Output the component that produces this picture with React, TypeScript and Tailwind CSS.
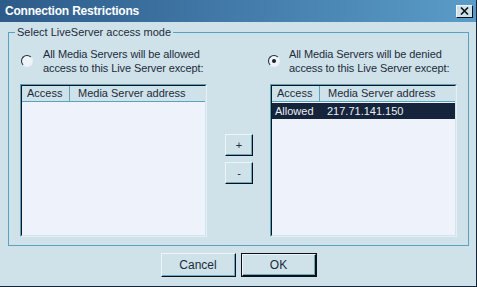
import React from 'react';

const font = "font-['Liberation_Sans',Arial,sans-serif]";

function Radio({ checked }: { checked?: boolean }) {
  return (
    <div className="relative h-[12px] w-[12px] shrink-0 rounded-full border border-t-[#1a2838] border-l-[#1a2838] border-r-[#e9f1f6] border-b-[#e9f1f6] bg-[#eef4f9]">
      {checked && (
        <div className="absolute left-[3px] top-[3px] h-[4px] w-[4px] rounded-full bg-[#15202c]" />
      )}
    </div>
  );
}

function ListView({ rows }: { rows: { access: string; addr: string }[] }) {
  return (
    <div className="mt-[10px] h-[153px] border border-t-[#5aa3bc] border-l-[#5aa3bc] border-r-[#e6f0f4] border-b-[#e6f0f4]">
      <div className="h-full border border-t-[#0d1722] border-l-[#0d1722] border-r-[#d2e4eb] border-b-[#d2e4eb] bg-[#eef3fb]">
        <div className="flex h-[16px] border-b border-[#5aa3bc] bg-[#cfe2ea] text-[11px] leading-[15px] text-[#1c2b3b]">
          <div className="w-[48px] shrink-0 border-r border-[#5aa3bc] pl-[5px]">Access</div>
          <div className="flex-1 pl-[8px]">Media Server address</div>
        </div>
        <div className="pt-[1px]">
          {rows.map((r) => (
            <div
              key={r.addr}
              className="flex h-[16px] bg-[#15243a] text-[11px] leading-[16px] text-[#e9eff6]"
            >
              <div className="w-[48px] shrink-0 pl-[3px]">{r.access}</div>
              <div className="flex-1 pl-[7px]">{r.addr}</div>
            </div>
          ))}
        </div>
      </div>
    </div>
  );
}

function Btn({ children, className = '' }: { children: React.ReactNode; className?: string }) {
  return (
    <div
      className={`flex items-center justify-center border border-t-[#eef5f8] border-l-[#eef5f8] border-r-[#0c1117] border-b-[#0c1117] bg-[#cfe2ea] text-[11px] text-[#1c2b3b] shadow-[inset_-1px_-1px_0_#6aa9bf] ${className}`}
    >
      {children}
    </div>
  );
}

export default function App() {
  return (
    <div className={`${font} h-[287px] w-[477px] overflow-hidden border-r border-b border-[#14253a] bg-[#cfe2ea] text-[#1c2b3b]`}>
      {/* title bar */}
      <div className="flex h-[22px] items-center justify-between bg-gradient-to-r from-[#2d5b8a] to-[#5a9cc9] pl-[5px] pr-[3px]">
        <span className="text-[12px] font-bold tracking-[-0.2px] text-white">Connection Restrictions</span>
        <div className="flex h-[13px] w-[17px] items-center justify-center border border-t-[#eef5f8] border-l-[#eef5f8] border-r-[#0c1117] border-b-[#0c1117] bg-[#cfe2ea]">
          <svg width="9" height="8" viewBox="0 0 9 8">
            <path d="M1 0.5 L8 7.5 M8 0.5 L1 7.5" stroke="#0c1117" strokeWidth="1.6" />
          </svg>
        </div>
      </div>

      <div className="flex flex-col px-[8px] pt-[10px]">
        {/* group box */}
        <div className="relative h-[214px] w-[461px] border border-[#5aa3bc]">
          <span className="absolute left-[6px] top-[-8px] bg-[#cfe2ea] px-[2px] text-[11px] leading-[14px]">
            Select LiveServer access mode
          </span>
          <div className="flex pl-[11px] pt-[14px]">
            <div className="flex w-[187px] flex-col">
              <div className="flex h-[27px] items-center pl-[1px]">
                <Radio />
                <div className="pl-[10px] text-[11px] leading-[14px] tracking-[-0.1px]">
                  All Media Servers will be allowed
                  <br />
                  access to this Live Server except:
                </div>
              </div>
              <ListView rows={[]} />
            </div>

            <div className="flex w-[63px] flex-col gap-[6px] pl-[18px] pt-[87px]">
              <Btn className="h-[22px] w-[28px]">+</Btn>
              <Btn className="h-[22px] w-[28px]">-</Btn>
            </div>

            <div className="flex w-[187px] flex-col">
              <div className="-ml-[2px] flex h-[27px] items-center">
                <Radio checked />
                <div className="pl-[9px] text-[11px] leading-[14px] tracking-[-0.1px]">
                  All Media Servers will be denied
                  <br />
                  access to this Live Server except:
                </div>
              </div>
              <ListView rows={[{ access: 'Allowed', addr: '217.71.141.150' }]} />
            </div>
          </div>
        </div>

        {/* footer buttons */}
        <div className="flex justify-center gap-[5px] pl-[1px] pt-[7px]">
          <Btn className="h-[24px] w-[75px] text-[12px]">Cancel</Btn>
          <div className="border border-[#0c1117]">
            <Btn className="h-[22px] w-[74px] text-[12px]">OK</Btn>
          </div>
        </div>
      </div>
    </div>
  );
}
